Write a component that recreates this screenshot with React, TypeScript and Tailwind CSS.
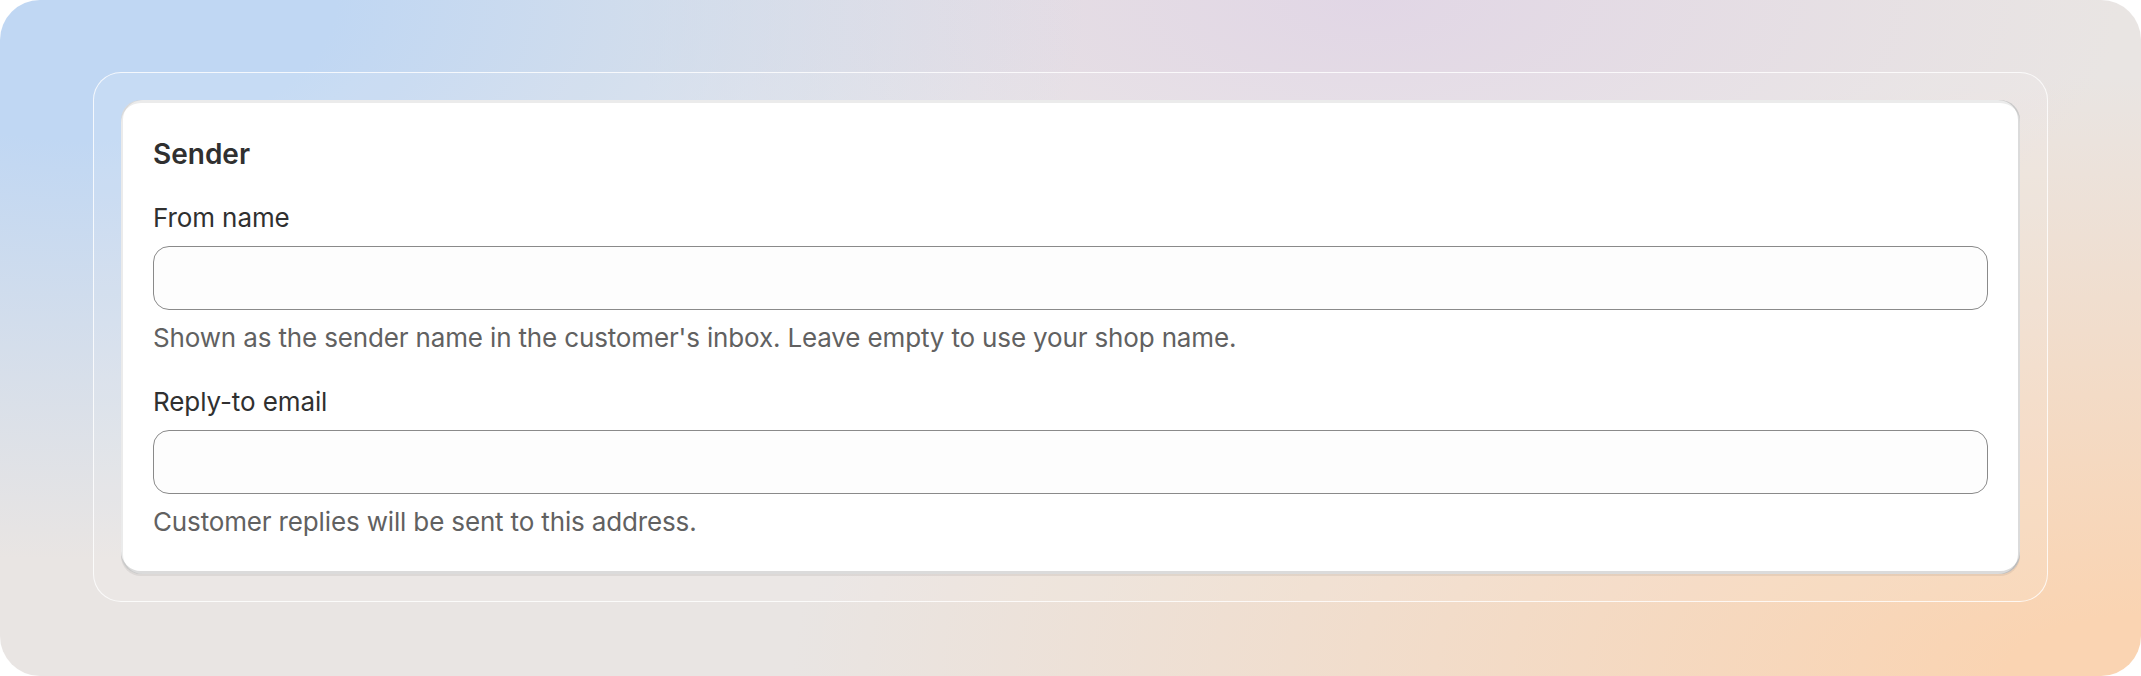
import React from "react";

function Field({ label, help }: { label: string; help: string }) {
  return (
    <div className="flex flex-col">
      <label className="text-[26px] leading-[40px] tracking-[-0.1px] text-[#303030]">{label}</label>
      <input
        type="text"
        className="mt-2 h-16 w-full rounded-[16px] border border-[#8a8a8a] bg-[#fdfdfd] px-6 text-[26px] text-[#303030] outline-none"
      />
      <p className="mt-2 text-[26px] leading-[40px] tracking-[-0.15px] text-[#616161]">{help}</p>
    </div>
  );
}

export default function App() {
  return (
    <div className="bg-white font-['Inter','Noto_Sans',sans-serif]">
      <div className="h-[676px] w-full rounded-[40px] bg-[#e9e5e3] bg-[radial-gradient(ellipse_1000px_560px_at_4%_0%,rgba(192,215,243,1)_25%,rgba(192,215,243,0)_100%),radial-gradient(ellipse_750px_340px_at_64%_0%,rgba(224,212,230,0.85)_0%,rgba(224,212,230,0)_100%),radial-gradient(ellipse_1350px_600px_at_100%_100%,rgba(250,212,178,1)_10%,rgba(250,212,178,0)_100%)] px-[93px] pt-[72px]">
        <div className="rounded-[28px] border border-white/80 bg-white/10 p-[27px]">
          <div className="rounded-[20px] bg-white px-8 pb-8 pt-[34px] shadow-[inset_2px_0_0_0_rgba(0,0,0,0.08),inset_-2px_0_0_0_rgba(0,0,0,0.14),inset_0_-3px_0_0_rgba(0,0,0,0.14),inset_0_3px_0_0_rgba(0,0,0,0.08),0_2px_0_0_rgba(26,26,26,0.07)]">
            <div className="flex flex-col gap-6">
              <h2 className="text-[28px] font-semibold leading-[40px] text-[#303030]">Sender</h2>
              <Field
                label="From name"
                help="Shown as the sender name in the customer's inbox. Leave empty to use your shop name."
              />
              <Field label="Reply-to email" help="Customer replies will be sent to this address." />
            </div>
          </div>
        </div>
      </div>
    </div>
  );
}
